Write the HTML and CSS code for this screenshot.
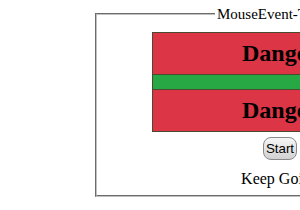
FILE: index.html
```html
<!DOCTYPE html>
<html lang="en">
<head>
    <meta charset="UTF-8">
    <meta name="viewport" content="width=device-width, initial-scale=1.0">
    <title>MouseEvent</title>
    <link rel="stylesheet" href="styles.css">
</head>
<body>
    <fieldset class="panel">
        <legend>MouseEvent-Test</legend>

        <!-- zones -->
        <div class="stack">
            <div class="danger">Danger</div>
            <div class="safe"></div>
            <div class="danger">Danger</div>
        </div>

        <div class="controls">
            <button class="start-button" id="start">Start</button>
        </div>
        <p class="status" id="status">Keep Going</p>
    </fieldset>
</body>
</html>
```

FILE: styles.css
```css
body {
    margin: 0;
    padding: 0;
    background-color: #fff;
    font-family: "Liberation Serif", "Times New Roman", serif;
    font-size: 16px;
    color: #000;
}
.panel {
    box-sizing: border-box;
    width: 370px;
    margin: 5px 0 0 95px;
    padding: 9px 12px 7px;
    border: 2px groove #c0c0c0;
}
.panel legend {
    margin-left: 106px;
    padding: 0 2px;
    font-size: 15px;
    line-height: 18px;
}
.stack {
    width: 254px;
    margin: 0 auto;
    border: 1px solid #4a4a30;
}
.danger {
    height: 41px;
    line-height: 41px;
    background-color: #dc3545;
    font-size: 24px;
    font-weight: bold;
    text-align: center;
}
.safe {
    height: 14px;
    background-color: #28a745;
    border-top: 1px solid #4a4a30;
    border-bottom: 1px solid #4a4a30;
}
.controls {
    margin-top: 5px;
    text-align: center;
}
.start-button {
    font-family: "Liberation Sans", Arial, sans-serif;
    font-size: 13.33px;
    padding: 3px 2px;
    border: 1px solid #8a8a8a;
    border-radius: 8px;
    background: linear-gradient(#f6f6f6, #d2d2d2);
    color: #000;
}
.status {
    margin: 10px 0 0;
    line-height: 18px;
    text-align: center;
}
```
